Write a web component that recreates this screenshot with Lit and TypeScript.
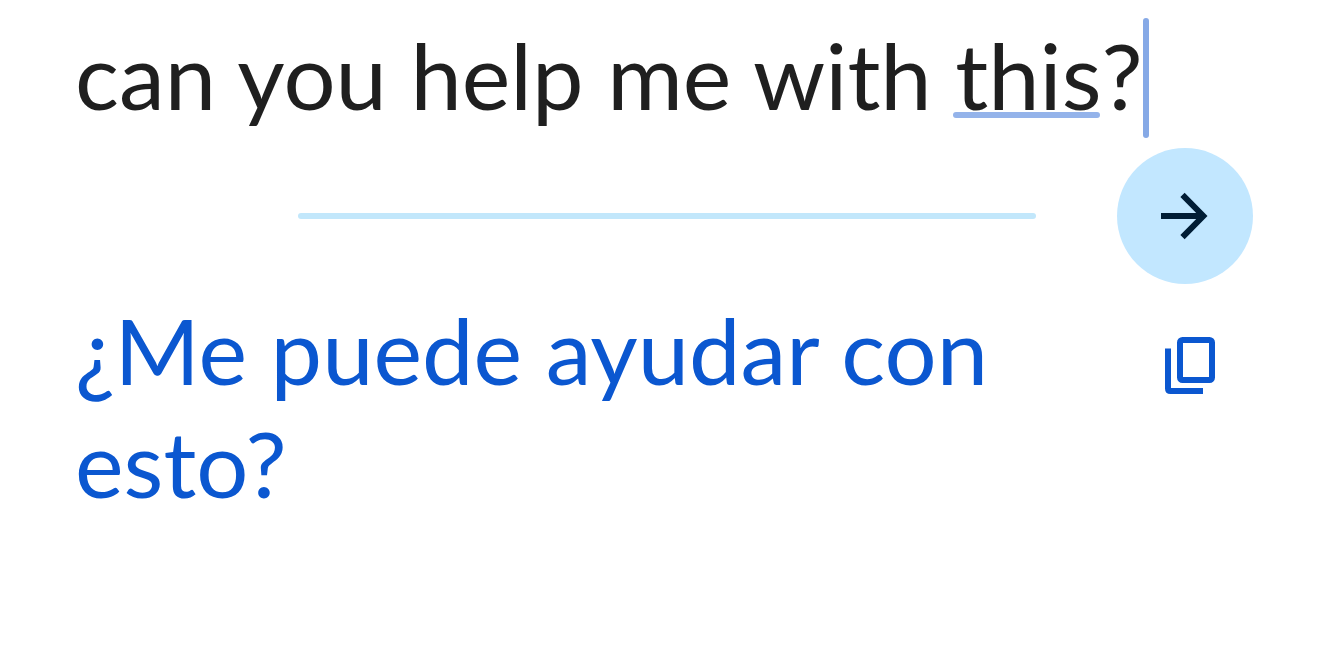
import { LitElement, html, css } from "lit";
import { customElement } from "lit/decorators.js";

@customElement("app-root")
export class AppRoot extends LitElement {
  static styles = css`
    :host {
      display: block;
      min-height: 100vh;
      box-sizing: border-box;
      background: #fff;
      font-family: "Lato", "Open Sans", sans-serif;
      font-size: 92px;
      line-height: 113px;
    }
    .page {
      display: flex;
      flex-direction: column;
      padding: 18px 81px 0 75px;
    }
    .source {
      display: flex;
      align-items: flex-start;
      color: #1f1f1f;
      white-space: nowrap;
    }
    .source p,
    .result p {
      margin: 0;
    }
    .composing {
      position: relative;
    }
    .composing::after {
      content: "";
      position: absolute;
      left: -2px;
      right: 2px;
      bottom: 12px;
      height: 6px;
      border-radius: 3px;
      background: #94b3ea;
    }
    .caret {
      width: 6px;
      height: 120px;
      border-radius: 3px;
      background: #86a9e6;
    }
    .divider {
      display: flex;
      align-items: center;
      justify-content: space-between;
      gap: 81px;
      margin-top: 10px;
      padding-left: 223px;
    }
    .rule {
      flex: 1;
      height: 6px;
      margin: 0;
      border: 0;
      border-radius: 3px;
      background: #c2e7fb;
    }
    button {
      display: grid;
      place-items: center;
      padding: 0;
      border: 0;
      background: none;
      cursor: pointer;
    }
    .go {
      width: 136px;
      height: 136px;
      border-radius: 50%;
      background: #c2e7ff;
    }
    .result {
      display: flex;
      justify-content: space-between;
      align-items: flex-start;
      margin-top: 9px;
      color: #0b57d0;
    }
    .result p {
      flex: 1;
      max-width: 960px;
    }
    .copy {
      margin: 44px 38px 0 0;
    }
  `;

  render() {
    return html`
      <main class="page">
        <section class="source">
          <p>can you help me with <span class="composing">this</span>?</p>
          <span class="caret"></span>
        </section>
        <div class="divider">
          <hr class="rule" />
          <button class="go" aria-label="Translate">
            <svg width="48" height="48" viewBox="0 0 48 48" fill="none" stroke="#001d35" stroke-width="6">
              <path d="M0 24H41M21.5 2.8L42.3 24L21.5 45.2" />
            </svg>
          </button>
        </div>
        <section class="result">
          <p lang="es">¿Me puede ayudar con esto?</p>
          <button class="copy" aria-label="Copy translation">
            <svg width="50" height="58" viewBox="0 0 50 58" fill="none" stroke="#0b57d0" stroke-width="6">
              <rect x="15" y="3" width="32" height="40" rx="2.5" />
              <path d="M3 11.5V51.5Q3 54 5.500 54H38" />
            </svg>
          </button>
        </section>
      </main>
    `;
  }
}
